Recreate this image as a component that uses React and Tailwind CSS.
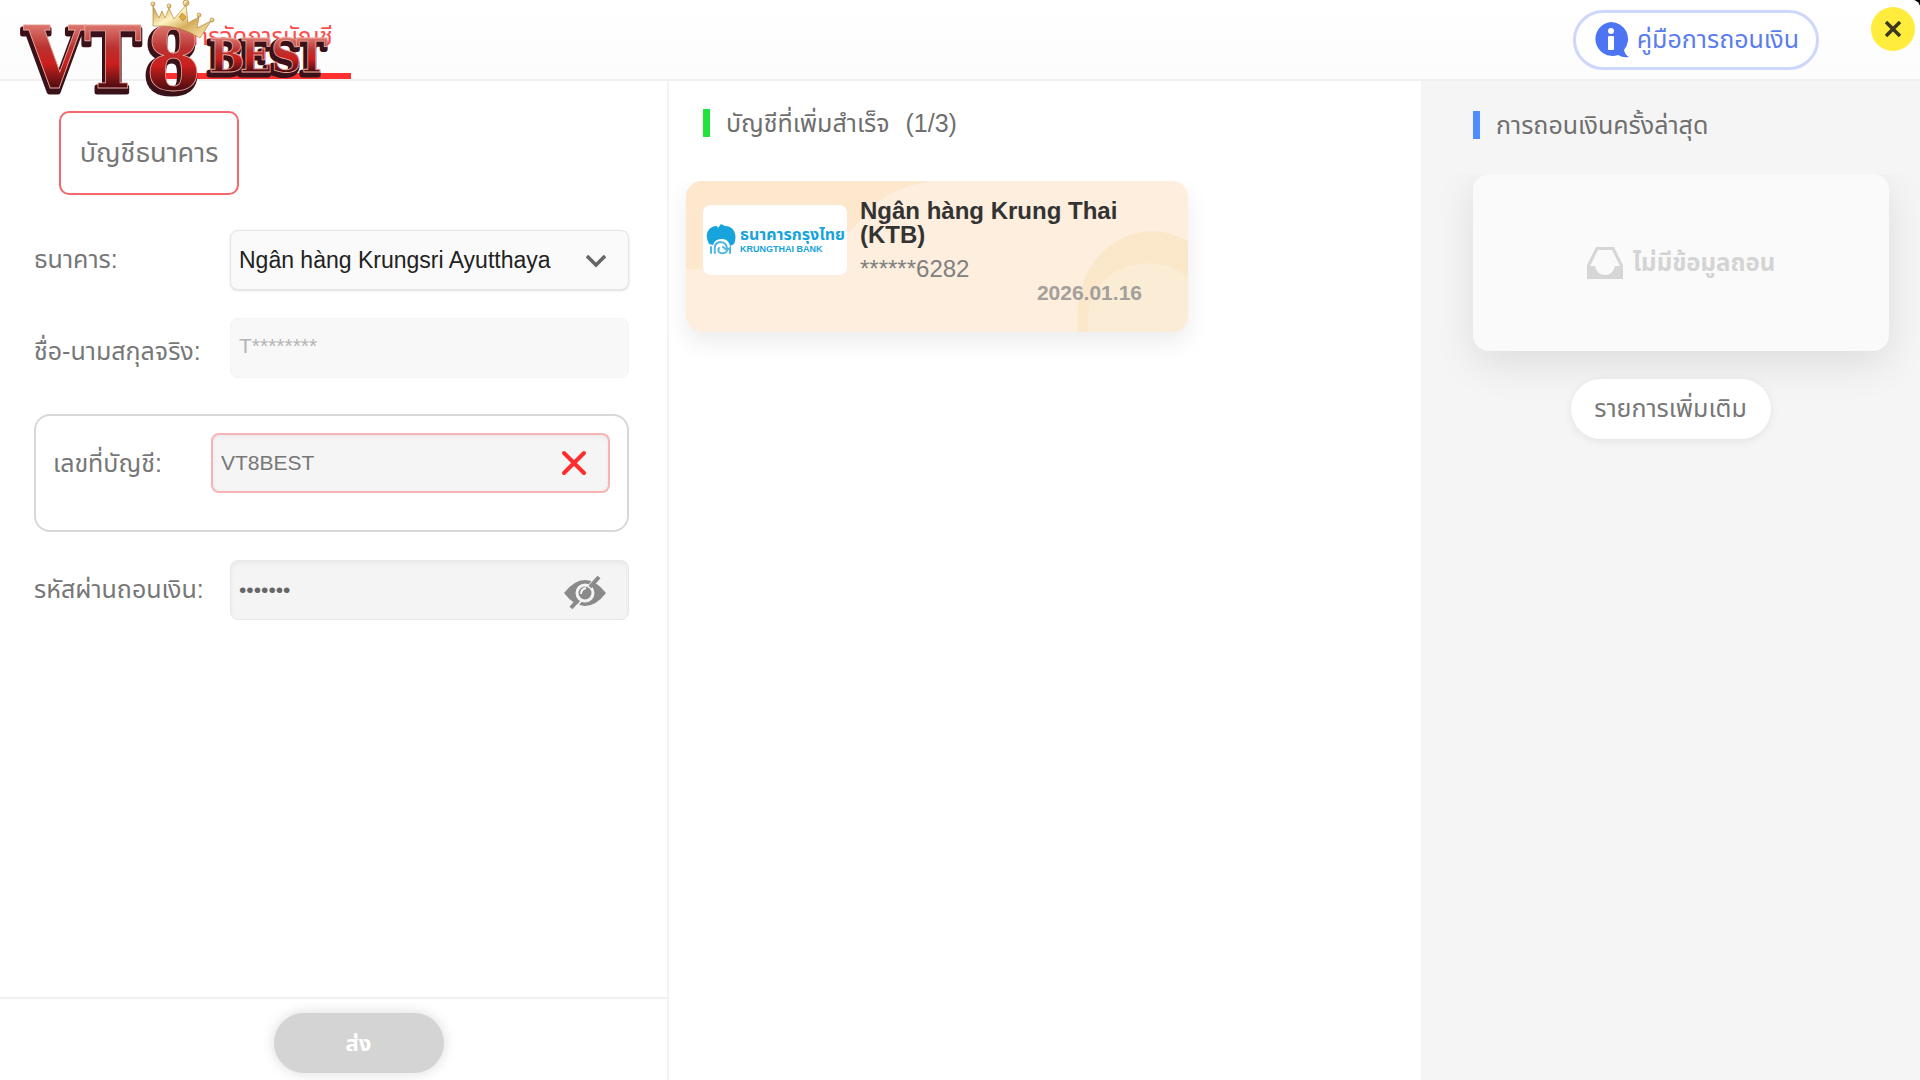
const field =
  "h-[60px] w-full rounded-lg border px-2 text-[21px] outline-none";

function SectionTitle({ bar, children }) {
  return (
    <h2 className="flex items-center gap-4 text-[25px] leading-7 text-[#6f6f6f]">
      <span className={`h-7 w-[7px] ${bar}`}></span>
      {children}
    </h2>
  );
}

function Logo() {
  return (
    <svg
      viewBox="0 0 340 104"
      className="h-[104px] w-[340px] overflow-visible"
      role="img"
      aria-label="VT8BEST"
    >
      <defs>
        <linearGradient id="red" x1="0" y1="0" x2="0" y2="1">
          <stop offset="0.2" stopColor="#d9706a" />
          <stop offset="0.4" stopColor="#b93330" />
          <stop offset="0.56" stopColor="#cc1f1d" />
          <stop offset="0.8" stopColor="#4a0d12" />
        </linearGradient>
        <linearGradient id="gold" x1="0" y1="0" x2="1" y2="1">
          <stop offset="0" stopColor="#c9952f" />
          <stop offset="0.35" stopColor="#fff3c4" />
          <stop offset="0.6" stopColor="#d6ae5c" />
          <stop offset="1" stopColor="#fdf0c0" />
        </linearGradient>
      </defs>
      <g fontFamily="'DejaVu Serif Condensed', 'DejaVu Serif', serif" fontWeight="bold">
        <g fill="#3a1119" stroke="#3a1119" strokeWidth="5" strokeLinejoin="round">
          <text x="23 83" y="92" fontSize="86">VT</text>
          <text x="144" y="93" fontSize="88">8</text>
          <text x="207 238 269 294" y="75" fontSize="47">BEST</text>
        </g>
        <g fill="url(#red)" stroke="#e9a79c" strokeWidth="0.8">
          <text x="24 84" y="88" fontSize="86">VT</text>
          <text x="146" y="90" fontSize="88">8</text>
          <text x="209 240 271 296" y="72" fontSize="47">BEST</text>
        </g>
      </g>
      <g fill="url(#gold)" stroke="#a97d2b" strokeWidth="0.6">
        <path d="M153 26 L153 6 L159 18 L162 11 L165 18 L169 8 L174 19 L186 5 L188 23 L199 17 L197 28 L211 21 L200 38 Q178 24 153 26 Z" />
        <path d="M182 13 L186 17 L183 21 L179 17 Z" fill="#e0a93a" />
        <circle cx="153" cy="4" r="2" />
        <circle cx="169" cy="6" r="2" />
        <circle cx="186" cy="3" r="3" />
        <circle cx="199" cy="15" r="2" />
        <circle cx="212" cy="20" r="2" />
      </g>
    </svg>
  );
}

function KrungthaiMark() {
  return (
    <svg viewBox="0 0 30 32" className="h-8 w-[30px] shrink-0">
      <path
        fill="#17a3dc"
        d="M12 4 L15 0 L19 2 Q25 2 28 7 Q31 13 28 20 L24 22 Q23 16 17 15 Q9 14 7 21 L3 20 Q-1 12 2 7 Q5 2 11 2 Z"
      />
      <g fill="none" stroke="#4fb8e2" strokeWidth="2" strokeLinecap="round">
        <path d="M5 23 V29 M9 29 Q7 19 14 18 Q20 18 21 24 Q22 30 15 29 Q11 28 13 24" />
        <path d="M17 23 Q21 27 24 24 V29" />
      </g>
    </svg>
  );
}

function Header() {
  return (
    <header className="relative flex h-[81px] items-center justify-between border-b-2 border-[#f0f0f0] bg-linear-to-b from-white to-[#fcfcfc] pr-[101px]">
      <nav className="flex h-full pl-[166px]">
        <a
          href="#accounts"
          className="flex h-full items-center border-b-[6px] border-[#ff3030] px-[18px] text-2xl leading-7 text-[#ff4d4d]"
        >
          การจัดการบัญชี
        </a>
      </nav>
      <div className="absolute top-0 left-0 z-10">
        <Logo />
      </div>
      <button className="flex h-[60px] items-center gap-2 rounded-full border-[3px] border-[#ccd7fb] bg-white px-[17px] text-[25px] text-[#5b7cf0]">
        <svg viewBox="0 0 36 36" className="size-9">
          <path fill="#4d74f2" d="M18 0 A17 17 0 0 1 31 28 Q32 33 36 35 Q30 36 25 33 A17 17 0 1 1 18 0 Z" />
          <circle cx="18" cy="9" r="3" fill="#fff" />
          <rect x="15" y="14" width="6" height="14" rx="1" fill="#fff" />
        </svg>
        คู่มือการถอนเงิน
      </button>
      <button
        aria-label="ปิด"
        className="absolute top-[7px] right-[5px] flex size-11 items-center justify-center rounded-full bg-[#ffec3d]"
      >
        <svg viewBox="0 0 16 16" className="size-4" stroke="#3b3720" strokeWidth="3.5">
          <path d="M1 1 L15 15 M15 1 L1 15" />
        </svg>
      </button>
    </header>
  );
}

function AccountForm() {
  return (
    <form className="flex w-[669px] shrink-0 flex-col border-r-2 border-[#f3f3f3]">
      <div className="flex grow flex-col pt-[30px] pr-[38px] pl-[34px] text-[25px] text-[#777]">
        <button
          type="button"
          className="ml-[25px] h-[84px] w-[180px] rounded-[10px] border-2 border-[#f4686c] text-[27px]"
        >
          บัญชีธนาคาร
        </button>

        <div className="mt-[35px] flex items-center">
          <label htmlFor="bank" className="w-[196px] shrink-0">ธนาคาร:</label>
          <div className="relative grow">
            <select
              id="bank"
              className="h-[60px] w-full appearance-none rounded-lg border border-[#e4e4e4] bg-[#fafafa] px-2 text-[23px] text-[#222] shadow-sm outline-none"
            >
              <option>Ngân hàng Krungsri Ayutthaya</option>
            </select>
            <svg
              viewBox="0 0 20 14"
              className="pointer-events-none absolute top-6 right-[23px] h-[14px] w-5"
              fill="none"
              stroke="#666"
              strokeWidth="3.5"
            >
              <path d="M1 2 L10 11 L19 2" />
            </svg>
          </div>
        </div>

        <div className="mt-7 flex items-center">
          <label htmlFor="name" className="w-[196px] shrink-0 pt-2">ชื่อ-นามสกุลจริง:</label>
          <input
            id="name"
            disabled
            defaultValue="T********"
            className={`${field} border-[#f3f3f3] bg-[#f8f8f8] pb-1 text-[#b5b5b5]`}
          />
        </div>

        <div className="mt-9 flex h-[118px] items-start rounded-2xl border-2 border-[#d8d8d8] px-[17px] pt-[17px]">
          <label htmlFor="account" className="w-[158px] shrink-0 leading-[60px]">เลขที่บัญชี:</label>
          <div className="relative grow">
            <input
              id="account"
              defaultValue="VT8BEST"
              className={`${field} border-2 border-[#f8b4b4] bg-[#f5f5f5] text-[#777] inset-shadow-sm`}
            />
            <svg
              viewBox="0 0 26 26"
              className="absolute top-[17px] right-[23px] size-[26px]"
              stroke="#ff2d2d"
              strokeWidth="4"
              strokeLinecap="round"
            >
              <path d="M3 3 L23 23 M23 3 L3 23" />
            </svg>
          </div>
        </div>

        <div className="mt-7 flex items-center">
          <label htmlFor="pin" className="w-[196px] shrink-0">รหัสผ่านถอนเงิน:</label>
          <div className="relative grow">
            <input
              id="pin"
              type="password"
              defaultValue="1234567"
              className={`${field} border-[#e8e8e8] bg-[#f4f4f4] text-[#666] inset-shadow-sm`}
            />
            <button type="button" aria-label="แสดงรหัสผ่าน" className="absolute top-4 right-[23px]">
              <svg viewBox="0 0 42 34" className="h-[34px] w-[42px]" fill="none">
                <path fill="#8a8a8a" d="M0 17 Q10 4 21 4 Q32 4 42 17 Q32 30 21 30 Q10 30 0 17 Z" />
                <circle cx="21" cy="17" r="8" stroke="#f4f4f4" strokeWidth="3" />
                <path d="M22 12 Q17 13 17 18" stroke="#f4f4f4" strokeWidth="2" />
                <path d="M33 0 L24 11 M17 25 L11 33" stroke="#f4f4f4" strokeWidth="2" />
                <path d="M35 1 L26 11 M14 24 L7 32" stroke="#8a8a8a" strokeWidth="4" />
              </svg>
            </button>
          </div>
        </div>
      </div>

      <div className="flex h-[83px] items-end justify-center border-t-2 border-[#f0f0f0] pb-[7px] pl-[50px]">
        <button
          disabled
          className="h-[60px] w-[170px] rounded-full bg-[#d4d4d4] text-[22px] font-bold text-white shadow-[0_0_14px_rgba(0,0,0,0.14)]"
        >
          ส่ง
        </button>
      </div>
    </form>
  );
}

function SavedAccounts() {
  return (
    <section className="min-w-0 grow pt-7">
      <div className="pl-[34px]">
        <SectionTitle bar="bg-[#22e33c]">
          <span>บัญชีที่เพิ่มสำเร็จ</span>
          <span>(1/3)</span>
        </SectionTitle>
      </div>
      <div className="mt-11 overflow-hidden pb-12 pl-[17px]">
        <article className="relative flex h-[151px] w-[502px] gap-[13px] rounded-2xl bg-[#fdeedd] pt-3 pl-[17px] shadow-[0_10px_25px_rgba(0,0,0,0.08)]">
          <svg viewBox="0 0 502 151" className="absolute inset-0 size-full rounded-2xl" fill="none">
            <path fill="#fde7cd" d="M0 0 H245 Q200 8 182 30 Q160 60 120 76 Q80 90 0 88 Z" />
            <path fill="#fbe7ca" d="M392 151 Q388 90 425 64 Q462 38 502 60 V151 Z" />
            <path fill="#fbecd6" d="M402 151 Q398 110 430 90 Q470 72 502 96 V151 Z" />
          </svg>
          <div className="relative mt-3 flex h-[70px] w-36 shrink-0 items-center gap-1 rounded-lg bg-white px-[3px]">
            <KrungthaiMark />
            <div className="flex flex-col whitespace-nowrap text-[#17a3dc]">
              <span className="text-[16px] leading-[18px] font-bold">ธนาคารกรุงไทย</span>
              <span className="text-[9px] leading-[11px] font-bold">KRUNGTHAI BANK</span>
            </div>
          </div>
          <div className="relative grow pt-[6px]">
            <h3 className="w-[280px] text-2xl leading-6 font-bold text-[#333]">Ngân hàng Krung Thai (KTB)</h3>
            <p className="mt-2 text-2xl leading-7 text-[#808080]">******6282</p>
            <time className="block pr-[46px] text-right text-[21px] leading-5 font-bold text-[#a3a09c]">
              2026.01.16
            </time>
          </div>
        </article>
      </div>
    </section>
  );
}

function RecentWithdrawals() {
  return (
    <aside className="w-[499px] shrink-0 bg-[#f5f5f5] pt-[30px]">
      <div className="pl-[52px]">
        <SectionTitle bar="bg-[#4d8dff]">การถอนเงินครั้งล่าสุด</SectionTitle>
      </div>
      <div className="mt-[35px] flex flex-col items-center overflow-hidden pb-6">
        <div className="w-full pr-[31px] pl-[52px]">
          <div className="flex h-[177px] items-center justify-center gap-[10px] rounded-2xl bg-[#fafafa] text-2xl font-bold text-[#d4d4d4] shadow-[0_12px_40px_rgba(0,0,0,0.1)]">
            <svg viewBox="0 0 36 32" className="h-8 w-9">
              <path
                fill="#d6d6d6"
                fillRule="evenodd"
                d="M9 0 H27 L36 18 V32 H0 V18 Z M11 3 L3 19 H8 Q10 28 18 28 Q26 28 28 19 H33 L25 3 Z"
              />
            </svg>
            <span>ไม่มีข้อมูลถอน</span>
          </div>
        </div>
        <button className="relative mt-7 h-[60px] w-[200px] rounded-full bg-white text-[25px] text-[#777] shadow-[0_2px_10px_rgba(0,0,0,0.08)]">
          รายการเพิ่มเติม
        </button>
      </div>
    </aside>
  );
}

export default function App() {
  return (
    <div className="bg-black font-['Liberation_Sans','Noto_Sans_Thai',sans-serif]">
      <div className="flex min-h-screen flex-col overflow-hidden rounded-tr-lg bg-white">
        <Header />
        <main className="flex grow">
          <AccountForm />
          <SavedAccounts />
          <RecentWithdrawals />
        </main>
      </div>
    </div>
  );
}
